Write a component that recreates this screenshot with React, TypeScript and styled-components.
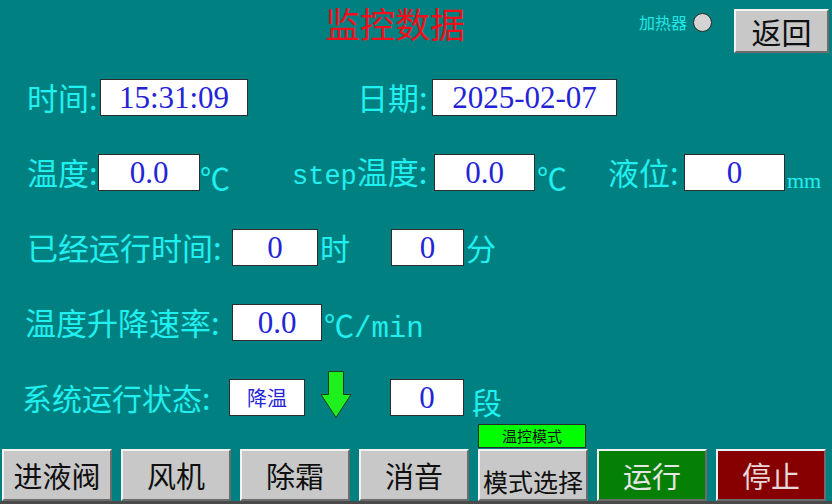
import styled, { createGlobalStyle } from 'styled-components';

const CJK = '"Noto Sans CJK SC", "Noto Sans CJK JP", sans-serif';
const NUM = '"Liberation Serif", "DejaVu Serif", serif';
const MONO = '"Liberation Mono", "DejaVu Sans Mono", monospace';

const GlobalStyle = createGlobalStyle`
  html, body {
    margin: 0;
    padding: 0;
    background: #008080;
  }
  body {
    font-family: ${CJK};
  }
  * {
    box-sizing: border-box;
  }
`;

const Screen = styled.div`
  width: 832px;
  height: 504px;
  background: #008080;
  display: flex;
  flex-direction: column;
  overflow: hidden;
`;

const Header = styled.header`
  height: 60px;
  padding-left: 325px;
  display: flex;
  align-items: flex-start;
`;

const Title = styled.div`
  flex: none;
  padding-top: 1px;
  font-size: 35px;
  line-height: 44px;
  color: #f0101c;
`;

const HeaderRight = styled.div`
  margin-left: auto;
  padding-right: 3px;
  display: flex;
  align-items: flex-start;
  gap: 22px;
`;

const Heater = styled.div`
  margin-top: 13px;
  display: flex;
  align-items: center;
  gap: 6px;
  font: 400 16px/19px ${CJK};
  color: #20e8e8;
`;

const Lamp = styled.span<{ on?: boolean }>`
  width: 19px;
  height: 19px;
  border-radius: 50%;
  border: 1px solid #2a2a2a;
  background: ${({ on }) => (on ? '#ff3030' : '#d4d4d4')};
`;

type Tone = 'grey' | 'green' | 'red';

const toneBg: Record<Tone, string> = {
  grey: '#c8c8c8',
  green: '#058005',
  red: '#860000',
};

const toneText: Record<Tone, string> = {
  grey: '#101010',
  green: '#e6e6e6',
  red: '#e8d8d8',
};

const PanelButton = styled.button<{ tone?: Tone; size?: number; drop?: number }>`
  height: 100%;
  margin: 0;
  padding: ${({ drop = 0 }) => `${drop}px 0 0`};
  display: flex;
  align-items: center;
  justify-content: center;
  border: 2px solid;
  border-color: #f2f2f2 #6c6c6c #6c6c6c #f2f2f2;
  background: ${({ tone = 'grey' }) => toneBg[tone]};
  color: ${({ tone = 'grey' }) => toneText[tone]};
  font: 400 ${({ size = 29 }) => size}px/1.2 ${CJK};
  white-space: nowrap;
  cursor: pointer;
`;

const BackButton = styled(PanelButton)`
  width: 95px;
  height: 44px;
  margin-top: 9px;
`;

const Body = styled.main`
  padding-top: 19px;
  display: flex;
  flex-direction: column;
  gap: 38px;
`;

const Row = styled.div`
  height: 37px;
  display: flex;
  align-items: center;
`;

const Field = styled.div<{ at?: number }>`
  margin-left: ${({ at = 0 }) => at}px;
  height: 100%;
  display: flex;
  align-items: center;
`;

const Label = styled.span<{ w: number; size?: number }>`
  width: ${({ w }) => w}px;
  flex: none;
  font: 400 ${({ size = 31 }) => size}px/1.1 ${CJK};
  color: #20f0f0;
  white-space: nowrap;
`;

const Latin = styled.span`
  font: 400 27px/1 ${MONO};
`;

const Value = styled.div<{ w: number; small?: boolean }>`
  width: ${({ w }) => w}px;
  height: 37px;
  flex: none;
  display: flex;
  align-items: center;
  justify-content: center;
  background: #ffffff;
  border: 1px solid #2c2c2c;
  color: #2424d6;
  font: ${({ small }) => (small ? `400 20px/1.2 ${CJK}` : `400 31px/1 ${NUM}`)};
  white-space: nowrap;
`;

const Unit = styled.span<{ w: number; low?: number; gapL?: number; size?: number }>`
  width: ${({ w }) => w}px;
  flex: none;
  margin-left: ${({ gapL = 2 }) => gapL}px;
  align-self: ${({ low }) => (low === undefined ? 'center' : 'flex-end')};
  margin-bottom: ${({ low = 0 }) => -low}px;
  font: 400 ${({ size = 30 }) => size}px/1.1 ${CJK};
  color: #20f0f0;
  white-space: nowrap;
`;

const UnitLatin = styled.span<{ size: number }>`
  font: 400 ${({ size }) => size}px/1 ${({ size }) => (size < 24 ? NUM : MONO)};
`;

const Arrow = styled.svg`
  flex: none;
  margin-top: -6px;
`;

const Footer = styled.footer`
  margin-top: auto;
  display: flex;
  flex-direction: column;
`;

const ButtonGrid = styled.div`
  padding-left: 2px;
  display: grid;
  grid-template-columns: repeat(7, 110px);
  grid-template-rows: 24px 52px;
  column-gap: 9px;
  row-gap: 1px;
`;

const ModeTag = styled.div`
  grid-column: 5;
  grid-row: 1;
  margin-right: 2px;
  display: flex;
  align-items: center;
  justify-content: center;
  background: #00ff00;
  border: 1px solid #2a2a2a;
  color: #111;
  font: 400 15px/1.2 ${CJK};
`;

const Slot = styled.div<{ col: number }>`
  grid-column: ${({ col }) => col};
  grid-row: 2;
  display: flex;
`;

const Strip = styled.div`
  height: 3px;
  background: #4a4a4a;
`;

const controls: { text: string; tone?: Tone; size?: number; drop?: number }[] = [
  { text: '进液阀' },
  { text: '风机' },
  { text: '除霜' },
  { text: '消音' },
  { text: '模式选择', size: 25, drop: 12 },
  { text: '运行', tone: 'green' },
  { text: '停止', tone: 'red' },
];

function DownArrow() {
  return (
    <Arrow width="32" height="48" viewBox="0 0 32 48">
      <path
        d="M8.5 0.5 H23.5 V23.5 H31 L16 46.5 L1 23.5 H8.5 Z"
        fill="#1ef01e"
        stroke="#1c3c1c"
        strokeWidth="1"
      />
    </Arrow>
  );
}

export default function App() {
  return (
    <>
      <GlobalStyle />
      <Screen>
        <Header>
          <Title>监控数据</Title>
          <HeaderRight>
            <Heater>
              加热器
              <Lamp />
            </Heater>
            <BackButton size={30}>返回</BackButton>
          </HeaderRight>
        </Header>

        <Body>
          <Row>
            <Field at={27}>
              <Label w={73}>时间:</Label>
              <Value w={148}>15:31:09</Value>
            </Field>
            <Field at={109}>
              <Label w={75}>日期:</Label>
              <Value w={185}>2025-02-07</Value>
            </Field>
          </Row>

          <Row>
            <Field at={27}>
              <Label w={71}>温度:</Label>
              <Value w={102}>0.0</Value>
              <Unit w={25} low={3} gapL={0}>℃</Unit>
            </Field>
            <Field at={67}>
              <Label w={142}>
                <Latin>step</Latin>温度:
              </Label>
              <Value w={101}>0.0</Value>
              <Unit w={25} low={3}>℃</Unit>
            </Field>
            <Field at={46}>
              <Label w={76}>液位:</Label>
              <Value w={101}>0</Value>
              <Unit w={34} low={1}>
                <UnitLatin size={22}>mm</UnitLatin>
              </Unit>
            </Field>
          </Row>

          <Row>
            <Field at={27}>
              <Label w={205}>已经运行时间:</Label>
              <Value w={86}>0</Value>
              <Unit w={27}>时</Unit>
            </Field>
            <Field at={44}>
              <Value w={73}>0</Value>
              <Unit w={30}>分</Unit>
            </Field>
          </Row>

          <Row>
            <Field at={25}>
              <Label w={207}>温度升降速率:</Label>
              <Value w={90}>0.0</Value>
              <Unit w={100} low={3}>
                ℃<UnitLatin size={29}>/min</UnitLatin>
              </Unit>
            </Field>
          </Row>

          <Row>
            <Field at={22}>
              <Label w={207} size={30}>系统运行状态:</Label>
              <Value w={76} small>降温</Value>
            </Field>
            <Field at={15}>
              <DownArrow />
            </Field>
            <Field at={38}>
              <Value w={74}>0</Value>
              <Unit w={30} low={2} gapL={8}>段</Unit>
            </Field>
          </Row>
        </Body>

        <Footer>
          <ButtonGrid>
            <ModeTag>温控模式</ModeTag>
            {controls.map((c, i) => (
              <Slot key={c.text} col={i + 1}>
                <PanelButton tone={c.tone} size={c.size} drop={c.drop} style={{ width: '100%' }}>
                  {c.text}
                </PanelButton>
              </Slot>
            ))}
          </ButtonGrid>
          <Strip />
        </Footer>
      </Screen>
    </>
  );
}
